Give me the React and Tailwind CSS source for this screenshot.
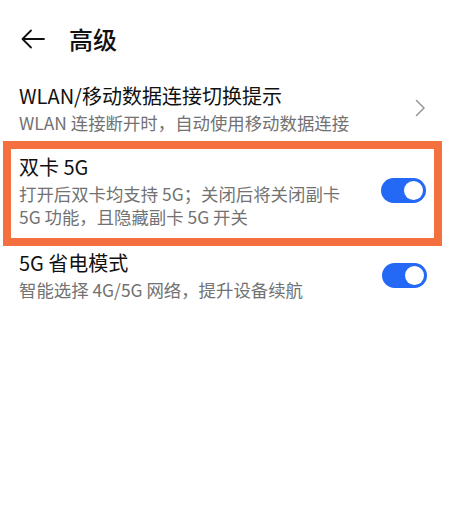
const font = { fontFamily: '"Noto Sans CJK SC", "Noto Sans", sans-serif' };

const Toggle = () => (
  <div className="w-[45px] h-[25px] rounded-full bg-[#2469f6] flex items-center justify-end pr-[3px] shrink-0">
    <div className="w-[19px] h-[19px] rounded-full bg-white" />
  </div>
);

const Chevron = () => (
  <svg width="11" height="18" viewBox="0 0 11 18" fill="none" stroke="#9a9a9a" strokeWidth="1.6" strokeLinecap="round" strokeLinejoin="round" className="shrink-0">
    <path d="M1.5 1.5 9 9l-7.5 7.5" />
  </svg>
);

const Row = ({ title, children, right }) => (
  <div className="flex items-center gap-3">
    <div className="flex-1 min-w-0">
      <p className="text-[20px] leading-[28px] text-[#111]">{title}</p>
      <p className="mt-[1px] text-[17.4px] leading-[23px] text-[#727272]">{children}</p>
    </div>
    {right}
  </div>
);

export default function App() {
  return (
    <div className="w-[450px] h-[519px] bg-white overflow-hidden" style={font}>
      {/* Header */}
      <div className="h-[78px] flex items-center pl-[21px] gap-[24px]">
        <svg width="24" height="20" viewBox="0 0 24 20" fill="none" stroke="#111" strokeWidth="1.8" strokeLinecap="round" strokeLinejoin="round">
          <path d="M23 10H2M10 1.5 1.5 10 10 18.5" />
        </svg>
        <h1 className="text-[24px] leading-[32px] font-medium text-[#111]">高级</h1>
      </div>

      {/* WLAN */}
      <div className="pl-[19px] pr-[24px] pt-[4px] pb-[7px]">
        <Row title="WLAN/移动数据连接切换提示" right={<Chevron />}>
          WLAN 连接断开时，自动使用移动数据连接
        </Row>
      </div>

      {/* 双卡 5G (highlighted) */}
      <div className="ml-[3px] mr-[8px] border-[8px] border-[#f5703f] pl-[8px] pr-[8px] pt-[4px] pb-[10px]">
        <Row title="双卡 5G" right={<Toggle />}>
          打开后双卡均支持 5G；关闭后将关闭副卡<br />5G 功能，且隐藏副卡 5G 开关
        </Row>
      </div>

      {/* 5G 省电模式 */}
      <div className="pl-[19px] pr-[23px] pt-[3px]">
        <Row title="5G 省电模式" right={<Toggle />}>
          智能选择 4G/5G 网络，提升设备续航
        </Row>
      </div>
    </div>
  );
}
